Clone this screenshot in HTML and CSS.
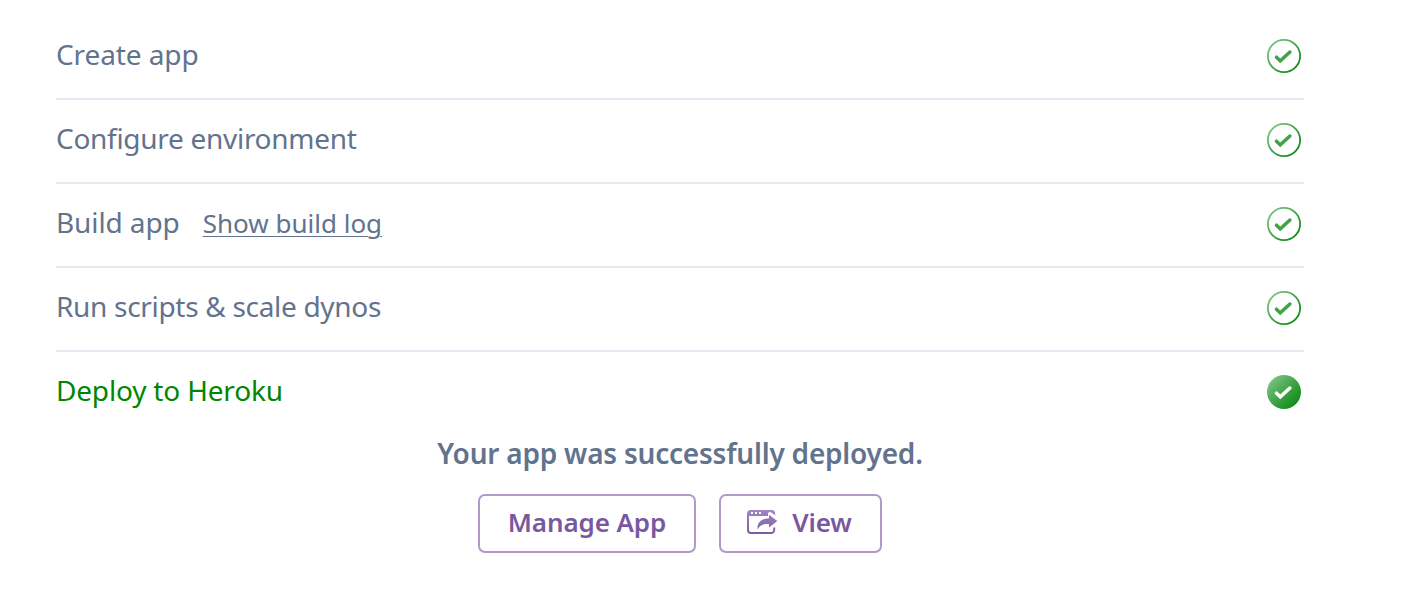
FILE: index.html
```
<!DOCTYPE html>
<html lang="en">
<head>
<meta charset="utf-8">
<title>Deploy</title>
<link rel="stylesheet" href="styles.css">
</head>
<body>
<svg class="defs" width="0" height="0" aria-hidden="true">
  <defs>
    <linearGradient id="green" x1="0" y1="0" x2="34" y2="34" gradientUnits="userSpaceOnUse"><stop offset=".1" stop-color="#7cc585"/><stop offset=".5" stop-color="#41a447"/><stop offset=".9" stop-color="#0b8a11"/></linearGradient>
    <linearGradient id="purple" x1="0" y1="0" x2="0" y2="25" gradientUnits="userSpaceOnUse"><stop offset="0" stop-color="#a284c8"/><stop offset="1" stop-color="#79589f"/></linearGradient>
    <symbol id="done" viewBox="0 0 34 34"><circle cx="17" cy="17" r="16.1" fill="none" stroke="url(#green)" stroke-width="1.8"/><path d="M9.500 18.200l3.800 3.700 9.600-8.900" fill="none" stroke="#41a447" stroke-width="3.500" stroke-linecap="round"/></symbol>
    <symbol id="done-solid" viewBox="0 0 34 34"><circle cx="17" cy="17" r="17" fill="url(#green)"/><path d="M9.500 18.200l3.800 3.700 9.600-8.900" fill="none" stroke="#fff" stroke-width="3.500" stroke-linecap="round"/></symbol>
  </defs>
</svg>
<main class="deploy">
  <ul class="steps">
    <li class="step"><span class="name create">Create app</span><svg class="check"><use href="#done"/></svg></li>
    <li class="step"><span class="name configure">Configure environment</span><svg class="check"><use href="#done"/></svg></li>
    <li class="step"><span class="name build">Build app</span><a class="log" href="#">Show build log</a><svg class="check"><use href="#done"/></svg></li>
    <li class="step"><span class="name scripts">Run scripts &amp; scale dynos</span><svg class="check"><use href="#done"/></svg></li>
    <li class="step current"><span class="name heroku">Deploy to Heroku</span><svg class="check"><use href="#done-solid"/></svg></li>
  </ul>
  <p class="message">Your app was successfully deployed.</p>
  <div class="actions">
    <button class="button manage"><span>Manage App</span></button>
    <button class="button view">
      <svg class="icon" viewBox="0 0 31 25"><path d="M27.200 17.500V20a3 3 0 0 1-3 3H4A3 3 0 0 1 1 20V4" fill="none" stroke="url(#purple)" stroke-width="2"/><path fill="url(#purple)" fill-rule="evenodd" d="M0 6V4a4 4 0 0 1 4-4H24.500a3.700 3.700 0 0 1 3.700 3.700V5.300L23 1.800L21 3V6ZM4 2v2h2V2ZM8 2v2h2V2ZM12 2v2h2V2Z"/><path fill="url(#purple)" d="M22 4.800L30.300 11L22 17.400V14C16.500 13.700 13 15 10.500 19.600C10 13 14 8.500 22 8.200Z"/></svg>
      <span>View</span>
    </button>
  </div>
</main>
</body>
</html>
```
FILE: styles.css
```
* { box-sizing: border-box; }
body { margin: 0; background: #fff; color: #62738d; font-family: "Noto Sans", "Open Sans", sans-serif; font-size: 28px; }
.defs { position: absolute; }
.deploy { width: 1248px; margin: 0 0 0 56px; padding-top: 16px; }
.steps { list-style: none; margin: 0; padding: 0; }
.step { display: flex; align-items: center; height: 84px; padding: 0 3px 2px 0; border-bottom: 2px solid #e6e9f4; white-space: nowrap; line-height: 40px; }
.step.current { height: 80px; padding-bottom: 0; border: 0; color: #008700; }
.check { width: 34px; height: 34px; margin-left: auto; }
.name { width: max-content; padding-bottom: 4px; }
.create, .build { letter-spacing: -.1px; }
.configure { letter-spacing: -.29px; }
.scripts { letter-spacing: -.31px; }
.heroku { letter-spacing: -.18px; }
.log { margin-left: 23px; padding-bottom: 2px; color: inherit; font-size: 26px; text-decoration-thickness: 1px; text-underline-offset: 3px; }
.message { margin: 1px 0 0; height: 40px; line-height: 40px; text-align: center; font-weight: 600; letter-spacing: -.22px; }
.actions { display: flex; justify-content: center; gap: 23px; margin-top: 21px; }
.button { display: flex; align-items: center; justify-content: center; height: 59px; padding: 0 0 4px; border: 2px solid #b09ac9; border-radius: 7px; background: #fff; color: #79589f; font: 600 26px/40px "Noto Sans", "Open Sans", sans-serif; letter-spacing: -.1px; white-space: nowrap; }
.manage { width: 218px; }
.view { width: 163px; padding-right: 2px; gap: 14px; }
.icon { width: 31px; height: 25px; margin-top: 1px; }
```
